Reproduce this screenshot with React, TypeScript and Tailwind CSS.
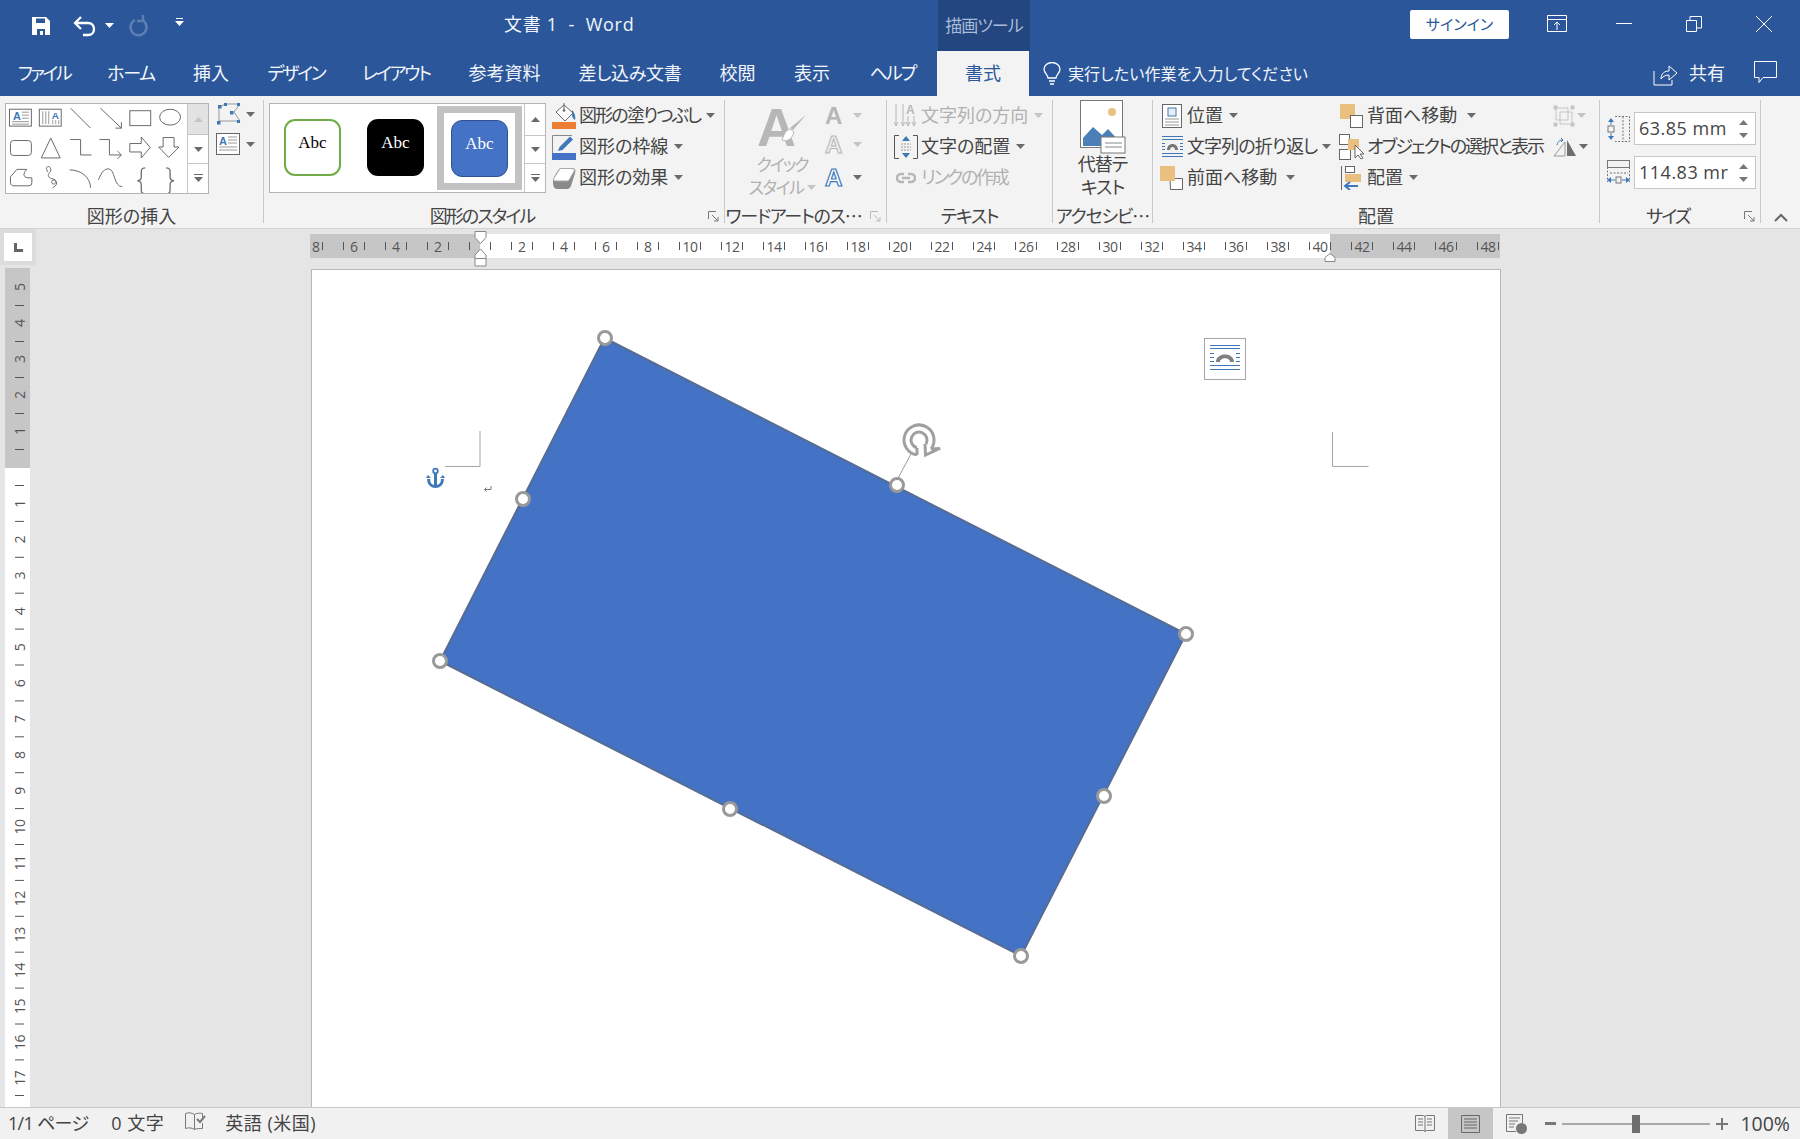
import React from "react";

const tabs: [string, number, string][] = [
  ["ファイル", 88, "tracking-[-2.5px]"],
  ["ホーム", 86, "tracking-[-1.3px]"],
  ["挿入", 74, ""],
  ["デザイン", 96, "tracking-[-2.3px]"],
  ["レイアウト", 104, "tracking-[-2.2px]"],
  ["参考資料", 113, ""],
  ["差し込み文書", 138, "tracking-[-0.3px]"],
  ["校閲", 77, ""],
  ["表示", 72, ""],
  ["ヘルプ", 89, "tracking-[-2px]"],
];

const Caret = ({ color = "#6a6a6a", className = "" }: { color?: string; className?: string }) => (
  <svg width="9" height="5" viewBox="0 0 9 5" className={className}>
    <path d="M0 0h9L4.500 5z" fill={color} />
  </svg>
);

const Sep = () => <div className="w-px h-[123px] bg-[#c8c8c8] shrink-0" />;

const Launcher = ({ color = "#777" }: { color?: string }) => (
  <svg width="11" height="11" viewBox="0 0 11 11" className="absolute right-[5px] bottom-[5px]">
    <path d="M.5 8V.5H8M4 4l6 6M10 6v4H6" fill="none" stroke={color} />
  </svg>
);

const Group = ({
  width,
  label,
  track = "",
  launcher,
  launcherColor,
  children,
}: {
  width: number;
  label: string;
  track?: string;
  launcher?: boolean;
  launcherColor?: string;
  children: React.ReactNode;
}) => (
  <div className="relative shrink-0 flex flex-col h-[127px]" style={{ width }}>
    <div className="h-[104px] flex">{children}</div>
    <div className={`h-[23px] flex items-center justify-center text-[18px] leading-none text-[#444] whitespace-nowrap ${track} ${launcher ? "pr-[24px]" : ""}`}>
      {label}
    </div>
    {launcher && <Launcher color={launcherColor} />}
  </div>
);

const Row = ({
  icon,
  label,
  track = "",
  caret = "ml-[6px]",
  disabled,
}: {
  icon: React.ReactNode;
  label: string;
  track?: string;
  caret?: string;
  disabled?: boolean;
}) => (
  <div className={`h-[31px] flex items-center whitespace-nowrap text-[18px] ${disabled ? "text-[#b1b1b1]" : "text-[#444]"}`}>
    <div className="w-[26px] h-[26px] flex items-center justify-center shrink-0">{icon}</div>
    <span className={`ml-[2px] ${track}`}>{label}</span>
    {caret && <Caret className={`shrink-0 ${caret}`} color={disabled ? "#c4c4c4" : "#6a6a6a"} />}
  </div>
);

const ScrollCell = ({ h, kind, off }: { h: string; kind: "up" | "down" | "more"; off?: boolean }) => (
  <div className={`${h} flex items-center justify-center border-b last:border-b-0 border-[#c6c6c6] ${off ? "bg-[#e2e2e2]" : "bg-white"}`}>
    <svg width="11" height="9" viewBox="0 0 11 9">
      {kind === "up" && <path d="M1 7h9L5.500 2z" fill={off ? "#c4c4c4" : "#6a6a6a"} />}
      {kind === "down" && <path d="M1 2h9L5.500 7z" fill="#6a6a6a" />}
      {kind === "more" && (
        <>
          <path d="M1 .5h9" stroke="#6a6a6a" />
          <path d="M1 3h9L5.500 8z" fill="#6a6a6a" />
        </>
      )}
    </svg>
  </div>
);

const ShapeGallery = () => (
  <svg width="182" height="89" viewBox="6 4 182 89" fill="none" stroke="#6a6a6a" strokeWidth="1">
    <rect x="9.500" y="9" width="22" height="17" fill="#fff" />
    <text x="13" y="20" fontSize="11" fontWeight="700" fill="#3f78b8" stroke="none" fontFamily="Liberation Sans">A</text>
    <path d="M22 12h7M22 15h7M22 18h7M12 21.500h17M12 24h17" stroke="#999" />
    <rect x="39.500" y="9" width="22" height="17" />
    <text x="52" y="19" fontSize="10" fontWeight="700" fill="#3f78b8" stroke="none" fontFamily="Liberation Sans">A</text>
    <path d="M43 11v13M46 11v13M49 11v13M53 20v4M56 20v4M59 20v4" stroke="#999" />
    <path d="M71 8l20 20" />
    <path d="M101 8l21 20M122 22v6h-6" />
    <rect x="130.500" y="10.500" width="21" height="15" />
    <ellipse cx="171" cy="17" rx="10.500" ry="8" />
    <rect x="10.500" y="40.500" width="21" height="15" rx="3" />
    <path d="M51 38L41.500 58h19z" />
    <path d="M70.500 39.500H81V55h11" />
    <path d="M100 39.500h10V55h12M118 51l4 4-4 4" />
    <path d="M130.500 43.500H142V37l9 10.500L142 58v-6h-11.500z" />
    <path d="M164 37.500h11V47h5l-10.500 10.500L159.500 47h4.500z" />
    <path d="M10.500 77l6.500-7.500h10c-3 2-5 8 1 8.500h4v5a3 3 0 0 1-3 3H14a3 3 0 0 1-3.500-3z" />
    <path d="M48 72c-4-6 2-7 3-3 1 4-4 4-2 8 2 3 7 1 7 5 0 3-4 3-4 0 0-3 5-2 5 1 0 3-3 4-4 5" />
    <path d="M70 70c12 0 21 8 21 18" />
    <path d="M99 80c3-8 6-11 10-11 7 0 5 18 14 18" />
    <path d="M146 68c-4 0-4 2-4 5v4c0 3-2 4-4 4 2 0 4 1 4 4v4c0 3 0 5 4 5" strokeWidth="1.300" />
    <path d="M167 68c4 0 4 2 4 5v4c0 3 2 4 4 4-2 0-4 1-4 4v4c0 3 0 5-4 5" strokeWidth="1.300" />
  </svg>
);

const Thumb = ({ cls }: { cls: string }) => (
  <div className={`w-[57px] h-[57px] rounded-[11px] flex items-center justify-center pb-[8px] font-['Liberation_Serif',serif] text-[17px] ${cls}`}>
    Abc
  </div>
);

const FillIcon = () => (
  <svg width="24" height="26" viewBox="0 0 24 26">
    <path d="M12 2l9 8-8 8-9-9z" fill="#fff" stroke="#666" />
    <path d="M12 0v7" stroke="#666" />
    <circle cx="12" cy="7.500" r="1.300" fill="#666" />
    <path d="M20 7c2 2 4 6 3 10-2-1-3-3-3-6z" fill="#3f78b8" />
    <rect y="19" width="24" height="7" fill="#ed7d31" />
  </svg>
);

const OutlineIcon = () => (
  <svg width="24" height="26" viewBox="0 0 24 26">
    <path d="M.5 19V1.500H20" fill="none" stroke="#888" />
    <path d="M6 17l1.500-4L18 2.500l3 3L10.500 16z" fill="#3f78b8" />
    <rect y="19" width="24" height="7" fill="#4472c4" />
  </svg>
);

const EffectIcon = () => (
  <svg width="24" height="24" viewBox="0 0 24 24">
    <path d="M1 15c0-3 6-13 8-13h11c3 0 4 2 3 5l-4 13c-1 2-2 3-4 3H5c-3 0-4-3-4-8z" fill="#8a8a8a" />
    <path d="M1.500 13L8 2.500h12c2 0 3 1 2 3l-4 7c-1 1-1 2.500-3 2.500H4c-2 0-3-1-2.500-2z" fill="#fff" stroke="#aaa" />
  </svg>
);

const OrangeSquares = ({ variant }: { variant: "back" | "front" }) => (
  <svg width="24" height="24" viewBox="0 0 24 24">
    {variant === "back" ? (
      <>
        <rect x="0" y="0" width="15" height="15" fill="#e9c07f" />
        <rect x="10.500" y="11.500" width="12" height="12" fill="#fff" stroke="#666" />
      </>
    ) : (
      <>
        <path d="M10 12.500h12.500v11h-12z" fill="#fff" stroke="#666" />
        <rect x="0" y="0" width="15" height="15" fill="#e9c07f" />
      </>
    )}
  </svg>
);

const WrapLines = ({ w = 21 }: { w?: number }) => (
  <svg width={w} height={w} viewBox="0 0 21 21">
    <path d="M0 .5h21M0 20.500h21M0 17.500h21M0 3.500h21" stroke="#3f78b8" />
    <path d="M0 7.500h3M0 10.500h3M0 13.500h3M18 7.500h3M18 10.500h3M18 13.500h3" stroke="#3f78b8" />
    <path d="M5 14c0-8 11-8 11 0h-3c0-4-5-4-5 0z" fill="#777" />
  </svg>
);

const Page = () => (
  <svg width="1188" height="837" viewBox="312 270 1188 837" className="absolute left-0 top-0">
    <path d="M480 431v35.500h-35M1332.500 432v34.500h36" fill="none" stroke="#a6a6a6" />
    <path d="M604.500 338L1186 634 1021 956 440 661z" fill="#4472c4" stroke="#566c92" strokeWidth="2" />
    <g fill="none" stroke="#3f78b8" strokeWidth="3">
      <circle cx="435.500" cy="471" r="2.300" strokeWidth="1.800" />
      <path d="M435.500 474v14M428.500 479c0 10 14 10 14 0" />
    </g>
    <path d="M426 478l2-3 3 3zM445 478l-2-3-3 3z" fill="#3f78b8" />
    <path d="M491 486v3.500h-6M486.500 487.500l-2 2 2 2" fill="none" stroke="#777" />
    <path d="M897 480l14-26" stroke="#9a9a9a" />
    <g fill="none" stroke="#a0a0a0" strokeWidth="3">
      <path d="M917 454.800A15 15 0 1 1 931 449" />
      <path d="M917 447.800A8 8 0 1 1 926 444" />
      <path d="M917 455v-7M931 449l9-.5-14.500 6.500-.5-11" />
    </g>
    {[
      [605, 338],
      [897, 485],
      [1186, 634],
      [1104, 796],
      [1021, 956],
      [730, 809],
      [440, 661],
      [523, 499],
    ].map(([x, y]) => (
      <circle key={x} cx={x} cy={y} r="6.500" fill="#fff" stroke="#999" strokeWidth="3" />
    ))}
    <rect x="1204.500" y="338.500" width="41" height="41" fill="#fff" stroke="#a6a6a6" />
    <g transform="translate(1210 345)">
      <path d="M0 .5h30M0 3.500h30M0 24.500h30M0 20.500h30" stroke="#3f78b8" />
      <path d="M0 8.500h4M0 12.500h4M0 16.500h4M26 8.500h4M26 12.500h4M26 16.500h4" stroke="#3f78b8" />
      <path d="M6 17c0-10 18-10 18 0h-4c0-5-10-5-10 0z" fill="#808080" />
    </g>
  </svg>
);

const HRuler = () => {
  const labels = [8, 6, 4, 2, 0, 2, 4, 6, 8, 10, 12, 14, 16, 18, 20, 22, 24, 26, 28, 30, 32, 34, 36, 38, 40, 42, 44, 46, 48];
  return (
    <svg width="1190" height="24" className="block">
      <rect width="1190" height="24" fill="#c6c6c6" />
      <rect x="170" width="850" height="24" fill="#fff" />
      {labels.map((n, i) => {
        const x = 2 + i * 42;
        return (
          <g key={i}>
            {n !== 0 && (
              <text x={i === 0 ? x + 4 : x} y="17.500" fontSize="14" textAnchor="middle" fill="#555" fontFamily="Open Sans" letterSpacing={n > 9 ? -0.5 : 0}>
                {n}
              </text>
            )}
            <path d={`M${x + 10.500} 8v8`} stroke="#555" />
            {i > 0 && <path d={`M${x - 10.500} 8v8`} stroke="#555" />}
          </g>
        );
      })}
    </svg>
  );
};

const VRuler = () => (
  <svg width="25" height="839" className="block">
    <rect width="25" height="839" fill="#fff" />
    <rect width="25" height="200" fill="#c6c6c6" />
    {[5, 4, 3, 2, 1].map((n, i) => (
      <g key={n}>
        <text transform={`translate(20 ${19 + i * 36}) rotate(-90)`} fontSize="14" textAnchor="middle" fill="#555" fontFamily="Open Sans">
          {n}
        </text>
        <path d={`M10 ${37.500 + i * 36}h9`} stroke="#555" />
      </g>
    ))}
    {Array.from({ length: 17 }, (_, i) => i + 1).map((n) => (
      <g key={n}>
        <text transform={`translate(20 ${200 + n * 35.900}) rotate(-90)`} fontSize="14" textAnchor="middle" fill="#555" fontFamily="Open Sans" letterSpacing={-0.5}>
          {n}
        </text>
        <path d={`M10 ${217.500 + (n - 1) * 35.900}h9`} stroke="#555" />
      </g>
    ))}
    <path d="M10 827.500h9" stroke="#555" />
  </svg>
);

const TitleBar = () => (
  <div className="h-[51px] flex items-center bg-[#2b579a] text-white shrink-0">
    <svg width="18" height="18" viewBox="0 0 18 18" className="ml-[32px]">
      <path d="M0 0h14l4 4v14H0z" fill="#fff" />
      <path d="M4 1.500h9v4.500H4z" fill="#2b579a" />
      <path d="M5 12h8v6h-2v-4H8v4H5z" fill="#2b579a" />
    </svg>
    <svg width="23" height="22" viewBox="0 0 23 22" className="ml-[23px]" fill="none" stroke="#fff" strokeWidth="2.300">
      <path d="M2 8h13c8 0 8 12 0 12h-5" />
      <path d="M8 2L2 8l6 6" />
    </svg>
    <Caret color="#fff" className="ml-[9px]" />
    <svg width="20" height="22" viewBox="0 0 20 22" className="ml-[15px]" fill="none" stroke="#5e7fb3" strokeWidth="2.500">
      <path d="M13 5a8 8 0 1 1-7 0" />
      <path d="M14 0v6h-6" />
    </svg>
    <svg width="9" height="9" viewBox="0 0 9 9" className="ml-[26px] mb-[6px]">
      <path d="M1 .5h7" stroke="#fff" />
      <path d="M0 3h9L4.500 8z" fill="#fff" />
    </svg>
    <div className="ml-[320px] w-[434px] mb-[2px] text-[18px] tracking-[0.7px] whitespace-pre text-[#f2f5fa]">文書 1  -  Word</div>
    <div className="w-[92px] h-full bg-[#234680] text-[#a9bbd6] text-[17px] tracking-[-1px] flex items-center justify-center whitespace-nowrap">描画ツール</div>
    <div className="ml-[380px] mb-[2px] w-[99px] h-[29px] bg-white rounded-[2px] text-[#2b579a] text-[15px] flex items-center justify-center">サインイン</div>
    <svg width="20" height="18" viewBox="0 0 20 18" className="ml-[38px] mb-[4px]" fill="none" stroke="#fff">
      <path d="M.5.500h19v16H.5zM.5 4.500h19M10 15V7M7 10l3-3 3 3" />
    </svg>
    <div className="ml-[49px] mb-[4px] w-[16px] h-px bg-white" />
    <svg width="16" height="16" viewBox="0 0 16 16" className="ml-[54px] mb-[4px]" fill="none" stroke="#fff">
      <path d="M.5 4.500h10v11H.5zM4 4.500V.5h11.500V12h-5" />
    </svg>
    <svg width="16" height="16" viewBox="0 0 16 16" className="ml-[54px] mb-[4px]" stroke="#fff">
      <path d="M0 0l16 16M16 0L0 16" />
    </svg>
  </div>
);

const TabBar = () => (
  <div className="h-[45px] flex items-center bg-[#2b579a] text-[#f2f5fa] text-[18px] shrink-0">
    {tabs.map(([name, w, track]) => (
      <div key={name} style={{ width: w }} className={`text-center whitespace-nowrap ${track}`}>
        {name}
      </div>
    ))}
    <div className="w-[92px] h-full bg-[#f3f3f3] text-[#2b579a] flex items-center justify-center">書式</div>
    <svg width="18" height="24" viewBox="0 0 18 24" className="ml-[14px]" fill="none" stroke="#fff" strokeWidth="1.300">
      <path d="M5 16c0-3-4-5-4-9a8 6.500 0 0 1 16 0c0 4-4 6-4 9z" />
      <path d="M6 19h6M7 22h4" />
    </svg>
    <div className="ml-[7px] w-[585px] text-[16px] tracking-[0.1px] whitespace-nowrap">実行したい作業を入力してください</div>
    <svg width="25" height="24" viewBox="0 0 25 24" fill="none" stroke="#fff">
      <path d="M1 9v14h18v-5M8 17c0-6 4-8 8-8V4l8 7-8 7v-5c-3 0-6 1-8 4z" />
    </svg>
    <div className="ml-[11px]">共有</div>
    <svg width="23" height="23" viewBox="0 0 23 23" className="ml-[29px] mb-[2px]" fill="none" stroke="#fff">
      <path d="M.5.500h22v16H9l-4 5v-5H.5z" />
    </svg>
  </div>
);

const Ribbon = () => (
  <div className="h-[133px] bg-[#f3f3f3] border-b border-[#d2d2d2] flex items-start pt-[4px] shrink-0">
    <Group width={263} label="図形の挿入">
      <div className="ml-[5px] mt-[3px] w-[204px] h-[91px] flex border border-[#b4b4b4] bg-white">
        <ShapeGallery />
        <div className="w-[21px] flex flex-col border-l border-[#c6c6c6] shrink-0">
          <ScrollCell h="h-[31px]" kind="up" off />
          <ScrollCell h="h-[29px]" kind="down" />
          <ScrollCell h="h-[29px]" kind="more" />
        </div>
      </div>
      <div className="ml-[7px] mt-[3px] flex flex-col gap-[8px]">
        <div className="flex items-center gap-[4px]">
          <svg width="26" height="22" viewBox="0 0 26 22" fill="none">
            <path d="M4 4L9 1h15l-6 8 6 9H3V4z" stroke="#999" />
            <g fill="#3f78b8">
              <rect x="2" y="2" width="3.500" height="3.500" />
              <rect x="8" y="0" width="3" height="3" />
              <rect x="21" y="0" width="3" height="3" />
              <rect x="14" y="8" width="3.500" height="3.500" />
              <rect x="21" y="17" width="3" height="3" />
              <rect x="1" y="18" width="3.500" height="3.500" />
            </g>
          </svg>
          <Caret />
        </div>
        <div className="flex items-center gap-[6px]">
          <svg width="24" height="22" viewBox="0 0 24 22">
            <rect x=".5" y=".5" width="23" height="21" fill="#fff" stroke="#666" />
            <text x="3" y="12" fontSize="11" fontWeight="700" fill="#3f78b8" fontFamily="Liberation Sans">A</text>
            <path d="M12 4h9M12 7h9M12 10h9M3 14h18M3 17h18" stroke="#999" />
          </svg>
          <Caret />
        </div>
      </div>
    </Group>
    <Sep />
    <Group width={460} label="図形のスタイル" track="tracking-[-1.900px]" launcher>
      <div className="ml-[5px] mt-[3px] w-[277px] h-[90px] flex border border-[#b4b4b4] bg-white">
        <div className="flex-1 flex items-center pl-[14px] pb-[2px] gap-[26px]">
          <Thumb cls="bg-white border-2 border-[#70ad47] text-black" />
          <Thumb cls="bg-black text-white" />
          <div className="w-[85px] h-[84px] -ml-[13px] mt-[2px] border-[7px] border-[#c2c2c2] flex items-center justify-center">
            <Thumb cls="bg-[#4472c4] border border-[#2f528f] text-white" />
          </div>
        </div>
        <div className="w-[21px] flex flex-col border-l border-[#c6c6c6] shrink-0">
          <ScrollCell h="h-[32px]" kind="up" />
          <ScrollCell h="h-[29px]" kind="down" />
          <ScrollCell h="h-[28px]" kind="more" />
        </div>
      </div>
      <div className="ml-[5px] flex flex-col">
        <Row icon={<FillIcon />} label="図形の塗りつぶし" track="tracking-[-1.800px]" />
        <Row icon={<OutlineIcon />} label="図形の枠線" />
        <Row icon={<EffectIcon />} label="図形の効果" />
      </div>
    </Group>
    <Sep />
    <Group width={161} label="ワードアートのス⋯" track="tracking-[-1.200px]" launcher launcherColor="#bbb">
      <div className="w-[114px] -mr-[14px] flex flex-col items-center text-[#b1b1b1] text-[17px] leading-[23px] pt-[2px]">
        <svg width="50" height="47" viewBox="0 0 50 47">
          <text x="0" y="44" fontSize="54" fontWeight="700" fill="#b7b7b7" fontFamily="Liberation Sans">A</text>
          <path d="M49 13L36 28l-3-2z" fill="#b7b7b7" />
          <path d="M33 27c-4 1-6 5-8 11 4 2 10 0 12-8z" fill="#fff" stroke="#b7b7b7" />
        </svg>
        <div className="mt-[4px] tracking-[-2px]">クイック</div>
        <div className="flex items-center gap-[3px]">
          <span className="tracking-[-1.500px]">スタイル</span>
          <Caret color="#c4c4c4" />
        </div>
      </div>
      <div className="flex flex-col font-['Liberation_Sans'] text-[24px] font-bold leading-none">
        <div className="h-[29px] mt-[1px] flex items-center gap-[11px] text-[#b7b7b7]">
          A
          <Caret color="#c4c4c4" />
        </div>
        <div className="h-[29px] flex items-center gap-[11px] text-[#eeeeee] [-webkit-text-stroke:1px_#b7b7b7]">
          A
          <Caret color="#c4c4c4" />
        </div>
        <div className="h-[31px] mt-[3px] flex items-center gap-[11px] text-[#ffffff] [-webkit-text-stroke:1.200px_#3f78b8]">
          A
          <Caret />
        </div>
      </div>
    </Group>
    <Sep />
    <Group width={165} label="テキスト" track="tracking-[-1.300px]">
      <div className="ml-[6px] flex flex-col">
        <Row
          disabled
          icon={
            <svg width="24" height="26" viewBox="0 0 24 26" stroke="#b7b7b7" fill="none">
              <path d="M2 1v21M0 19l2 4 2-4M9 1v21M7 19l2 4 2-4M20 13v9M18 19l2 4 2-4M14 13v9M12 19l2 4 2-4" />
              <text x="12" y="11" fontSize="12" fontWeight="700" fill="#b7b7b7" stroke="none" fontFamily="Liberation Sans">A</text>
            </svg>
          }
          label="文字列の方向"
        />
        <Row
          icon={
            <svg width="24" height="24" viewBox="0 0 24 24" fill="none">
              <path d="M5 .5H.5v23H5M19 .5h4.500v23H19" stroke="#555" />
              <path d="M7 12h10M7 15h10M7 9h10" stroke="#999" strokeDasharray="2 1" />
              <path d="M12 1l4 5H8zM12 23l4-5H8z" fill="#3f78b8" />
            </svg>
          }
          label="文字の配置"
        />
        <Row
          disabled
          icon={
            <svg width="20" height="12" viewBox="0 0 20 12" fill="none" stroke="#b7b7b7" strokeWidth="2.500">
              <path d="M8 2H5a4 4 0 0 0 0 8h3M12 2h3a4 4 0 0 1 0 8h-3M6 6h8" />
            </svg>
          }
          label="リンクの作成"
          track="tracking-[-2.300px]"
          caret=""
        />
      </div>
    </Group>
    <Sep />
    <Group width={99} label="アクセシビ⋯" track="tracking-[-1.200px]">
      <div className="w-full flex flex-col items-center text-[18px] leading-[23px] text-[#444]">
        <svg width="46" height="54" viewBox="0 0 46 54">
          <rect x=".5" y=".5" width="42" height="47" fill="#fff" stroke="#777" />
          <circle cx="32" cy="12" r="4" fill="#e9c07f" />
          <path d="M3 46V38l10-11 9 8 6-6 12 13v4z" fill="#4a7fb8" />
          <rect x="21" y="37" width="24" height="16" fill="#fff" stroke="#777" />
          <path d="M25 43h17M25 47h17" stroke="#888" />
        </svg>
        <div className="-mt-[1px] tracking-[-1px]">代替テ</div>
        <div className="tracking-[-1px]">キスト</div>
      </div>
    </Group>
    <Sep />
    <Group width={446} label="配置">
      <div className="ml-[6px] w-[180px] flex flex-col">
        <Row
          icon={
            <svg width="20" height="24" viewBox="0 0 20 24" fill="none">
              <rect x=".5" y=".5" width="19" height="23" fill="#fff" stroke="#666" />
              <rect x="6" y="4" width="8" height="8" fill="#e9edf4" stroke="#3f78b8" />
              <path d="M3 15h14M3 18h14M3 21h14" stroke="#999" />
            </svg>
          }
          label="位置"
        />
        <Row icon={<WrapLines />} label="文字列の折り返し" track="tracking-[-0.900px]" caret="ml-[5px]" />
        <Row icon={<OrangeSquares variant="front" />} label="前面へ移動" caret="ml-[9px]" />
      </div>
      <div className="w-[214px] flex flex-col">
        <Row icon={<OrangeSquares variant="back" />} label="背面へ移動" caret="ml-[10px]" />
        <Row
          icon={
            <svg width="26" height="26" viewBox="0 0 26 26" fill="none">
              <rect x=".5" y=".5" width="10" height="10" stroke="#666" fill="#fff" />
              <rect x=".5" y="15.500" width="11" height="10" stroke="#666" fill="#fff" />
              <rect x="9" y="5" width="11" height="11" fill="#e9c07f" />
              <path d="M16 11v13l3-3 3 4 2-1-3-4h4z" fill="#fff" stroke="#666" />
            </svg>
          }
          label="オブジェクトの選択と表示"
          track="tracking-[-2px]"
          caret=""
        />
        <Row
          icon={
            <svg width="22" height="24" viewBox="0 0 22 24" fill="none">
              <path d="M.5 0v24" stroke="#666" />
              <rect x="4.500" y=".5" width="9" height="6" fill="#fff" stroke="#666" />
              <rect x="4" y="8" width="16" height="8" fill="#e9c07f" />
              <path d="M5 20h12M9 16l-5 4 5 4" stroke="#3f78b8" strokeWidth="2" />
            </svg>
          }
          label="配置"
        />
      </div>
      <div className="flex flex-col">
        <div className="h-[31px] flex items-center gap-[2px]">
          <svg width="22" height="22" viewBox="0 0 22 22" fill="none" stroke="#c4c4c4">
            <path d="M3 3h12v12H3zM7 7h12v12H7z" />
            <path d="M1 1h3v3H1zM18 1h3v3h-3zM1 18h3v3H1zM18 18h3v3h-3z" fill="#c4c4c4" />
          </svg>
          <Caret color="#c4c4c4" />
        </div>
        <div className="h-[31px] flex items-center gap-[2px]">
          <svg width="24" height="20" viewBox="0 0 24 20" fill="none">
            <path d="M12 5L1 19h11z" stroke="#999" />
            <path d="M14 3v16h9z" fill="#6e6e6e" />
            <path d="M4 8c1-4 3-5 6-5M8 1l2 2-2 2" stroke="#3f78b8" />
          </svg>
          <Caret />
        </div>
      </div>
    </Group>
    <Sep />
    <Group width={160} label="サイズ" track="tracking-[-1.800px]" launcher>
      <div className="ml-[7px] mt-[12px] flex flex-col gap-[11px]">
        {[
          ["63.85 mm", "h"],
          ["114.83 mr", "w"],
        ].map(([v, kind]) => (
          <div key={kind} className="flex items-center gap-[4px]">
            <svg width="23" height="26" viewBox="0 0 23 26" fill="none">
              {kind === "h" ? (
                <>
                  <path d="M8 .5h14.500v25H8M16 .5v25" stroke="#777" strokeDasharray="2 1.500" />
                  <rect x="1" y="10" width="6" height="6" stroke="#777" />
                  <path d="M4 2l3 4H1zM4 24l3-4H1z" fill="#3f78b8" />
                  <path d="M4 5v4M4 17v4" stroke="#3f78b8" />
                </>
              ) : (
                <>
                  <rect x=".5" y=".5" width="22" height="7" stroke="#777" />
                  <path d="M.5 7v15M22.500 7v15M3 13h18" stroke="#777" strokeDasharray="2 1.500" />
                  <rect x="9" y="17" width="5" height="6" stroke="#777" />
                  <path d="M0 20l4-3v6zM23 20l-4-3v6z" fill="#3f78b8" />
                  <path d="M4 20h4M15 20h4" stroke="#3f78b8" />
                </>
              )}
            </svg>
            <div className="w-[122px] h-[33px] bg-white border border-[#c6c6c6] flex items-center justify-between pl-[4px] pr-[7px] overflow-hidden">
              <span className="text-[18px] text-[#444] tracking-[0.5px] whitespace-nowrap">{v}</span>
              <div className="flex flex-col gap-[8px] shrink-0">
                <svg width="9" height="5" viewBox="0 0 9 5"><path d="M0 5h9L4.500 0z" fill="#777" /></svg>
                <svg width="9" height="5" viewBox="0 0 9 5"><path d="M0 0h9L4.500 5z" fill="#777" /></svg>
              </div>
            </div>
          </div>
        ))}
      </div>
    </Group>
    <Sep />
    <div className="flex-1 h-[127px] flex items-end justify-center pb-[5px]">
      <svg width="14" height="9" viewBox="0 0 14 9" fill="none" stroke="#666" strokeWidth="2">
        <path d="M1 8l6-6 6 6" />
      </svg>
    </div>
  </div>
);

const StatusBar = () => (
  <div className="h-[32px] bg-[#f1f1f1] border-t border-[#c8c8c8] flex items-center text-[18px] text-[#444] shrink-0">
    <span className="ml-[8px] tracking-[-0.700px]">1/1 ページ</span>
    <span className="ml-[23px] tracking-[0.5px]">0 文字</span>
    <svg width="21" height="20" viewBox="0 0 21 20" className="ml-[21px] mb-[4px]" fill="none" stroke="#777">
      <path d="M.5 1.500c3-1 6-1 9 1v15c-3-2-6-2-9-1zM9.500 2.500c2-1.500 6-1.500 8-1v4M17.500 11v5.500c-3 0-6 0-8 1" />
      <path d="M12 7l3 3 5-6" stroke="#777" strokeWidth="2" />
    </svg>
    <span className="ml-[19px] tracking-[0.5px]">英語 (米国)</span>
    <svg width="20" height="19" viewBox="0 0 20 19" className="ml-auto" fill="none" stroke="#777">
      <path d="M.5 1.500h8l1.500 1 1.500-1h8v15h-8l-1.500 1-1.500-1h-8zM10 2.500v15M3 5h5M3 8h5M3 11h5M12 5h5M12 8h5M12 11h5" />
    </svg>
    <div className="ml-[13px] w-[45px] h-full bg-[#c6c6c6] flex items-center justify-center">
      <svg width="19" height="18" viewBox="0 0 19 18" fill="none" stroke="#666">
        <path d="M.5.500h18v17H.5zM3 4h13M3 7h13M3 10h13M3 13h13" />
      </svg>
    </div>
    <svg width="21" height="20" viewBox="0 0 21 20" className="ml-[13px]" fill="none" stroke="#777">
      <path d="M10 17.500H.5V.5h16V9M3 4h11M3 7h9M3 10h6M3 13h5" />
      <circle cx="15.500" cy="14.500" r="5.500" fill="#777" stroke="none" />
    </svg>
    <div className="ml-[18px] w-[11px] h-[3px] bg-[#777]" />
    <div className="ml-[6px] w-[148px] h-[2px] bg-[#a8a8a8] relative">
      <div className="absolute left-[70px] -top-[8px] w-[8px] h-[18px] bg-[#6e6e6e]" />
    </div>
    <svg width="12" height="12" viewBox="0 0 12 12" className="ml-[6px]" fill="#777">
      <path d="M0 5h12v2H0zM5 0h2v12H5z" />
    </svg>
    <span className="ml-[12px] mr-[10px] text-[19.500px]">100%</span>
  </div>
);

export default function App() {
  return (
    <div className="w-[1800px] h-[1139px] flex flex-col overflow-hidden font-['Open_Sans','Noto_Sans_CJK_JP',sans-serif] [font-feature-settings:'palt'] bg-[#e6e6e6]">
      <TitleBar />
      <TabBar />
      <Ribbon />
      <div className="flex-1 min-h-0 flex bg-[#e6e6e6] bg-[radial-gradient(#e3e3e3_1px,transparent_1px)] bg-[size:4px_4px]">
        <div className="w-[36px] shrink-0 flex flex-col">
          <div className="w-[36px] h-[36px] bg-[#dcdcdc] flex items-start">
            <div className="ml-[4px] mt-[4px] w-[28px] h-[28px] bg-white flex items-center justify-center">
              <div className="w-[9px] h-[9px] border-l-[3px] border-b-[3px] border-[#666]" />
            </div>
          </div>
          <div className="ml-[5px] mt-[3px] overflow-hidden">
            <VRuler />
          </div>
        </div>
        <div className="ml-[274px] w-[1190px] flex flex-col relative">
          <div className="mt-[5px]">
            <HRuler />
          </div>
          <svg width="16" height="36" viewBox="0 0 16 36" className="absolute left-[163px] top-[2px]" fill="#fff" stroke="#888">
            <path d="M2 .5h11v6l-5.500 6L2 6.500zM7.500 18l5.500 6v11H2V24z" />
            <path d="M2 27.500h11" />
          </svg>
          <svg width="14" height="9" viewBox="0 0 14 9" className="absolute left-[1013px] top-[24px]" fill="#fff" stroke="#888">
            <path d="M7 .5l5 4v4H2v-4z" />
          </svg>
          <div className="mt-[11px] ml-px -mr-px flex-1 relative bg-white border-l border-r border-t border-[#b8b8b8]">
            <Page />
          </div>
        </div>
      </div>
      <StatusBar />
    </div>
  );
}
